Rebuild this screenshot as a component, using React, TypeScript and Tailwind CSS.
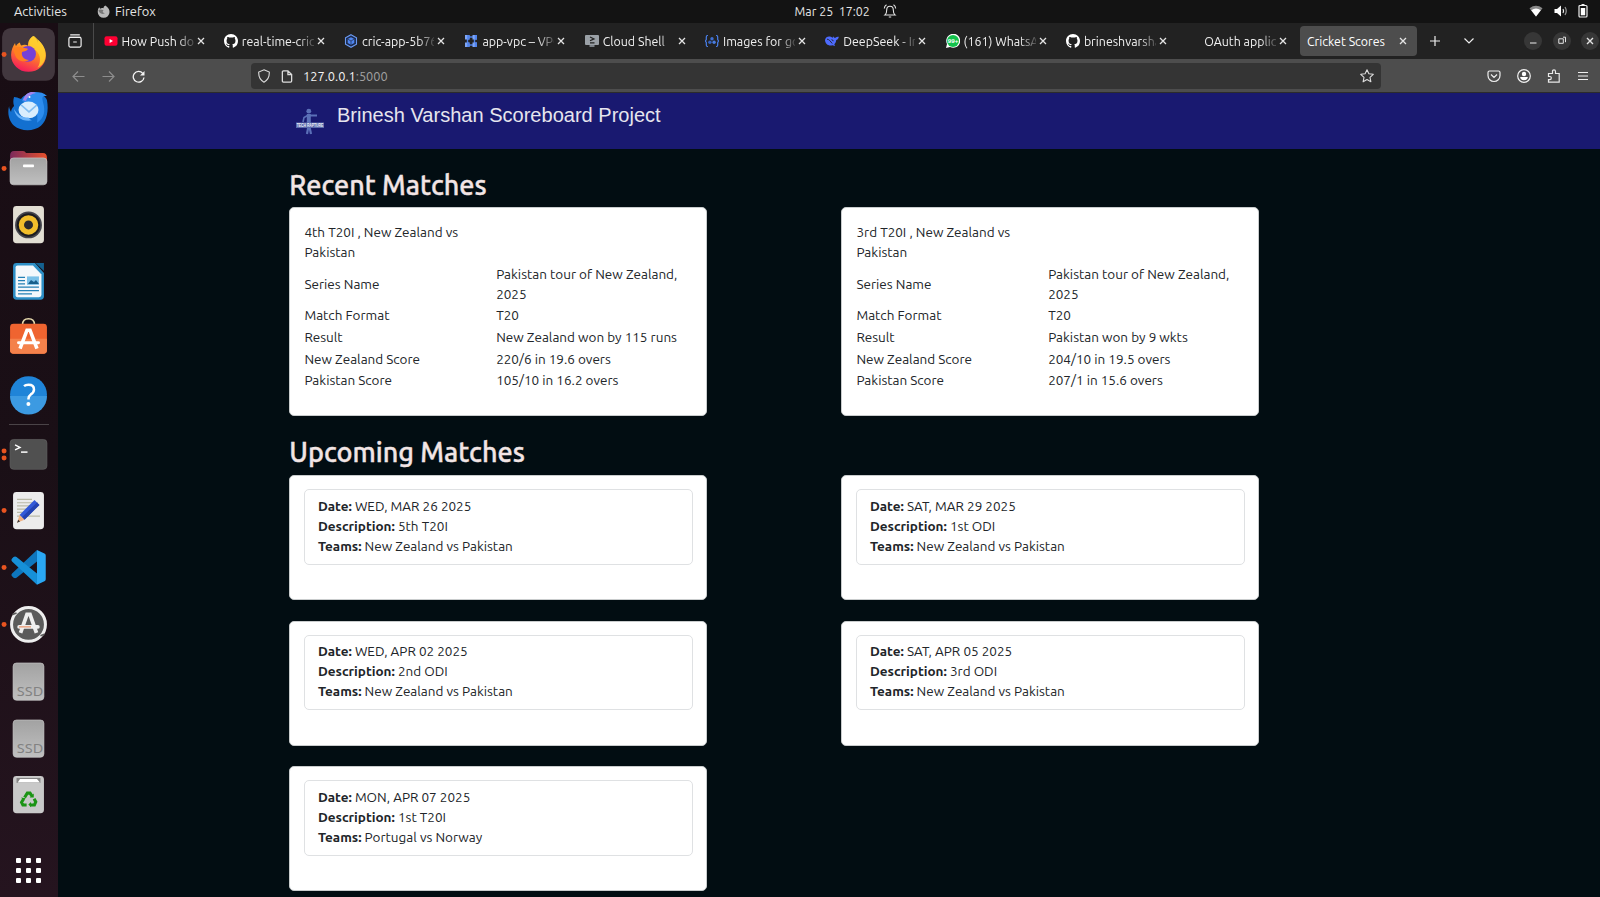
import React from "react";

const recent = [
  {
    title: "4th T20I , New Zealand vs Pakistan",
    rows: [
      ["Series Name", "Pakistan tour of New Zealand, 2025"],
      ["Match Format", "T20"],
      ["Result", "New Zealand won by 115 runs"],
      ["New Zealand Score", "220/6 in 19.6 overs"],
      ["Pakistan Score", "105/10 in 16.2 overs"],
    ],
  },
  {
    title: "3rd T20I , New Zealand vs Pakistan",
    rows: [
      ["Series Name", "Pakistan tour of New Zealand, 2025"],
      ["Match Format", "T20"],
      ["Result", "Pakistan won by 9 wkts"],
      ["New Zealand Score", "204/10 in 19.5 overs"],
      ["Pakistan Score", "207/1 in 15.6 overs"],
    ],
  },
];

const upcoming = [
  ["WED, MAR 26 2025", "5th T20I", "New Zealand vs Pakistan"],
  ["SAT, MAR 29 2025", "1st ODI", "New Zealand vs Pakistan"],
  ["WED, APR 02 2025", "2nd ODI", "New Zealand vs Pakistan"],
  ["SAT, APR 05 2025", "3rd ODI", "New Zealand vs Pakistan"],
  ["MON, APR 07 2025", "1st T20I", "Portugal vs Norway"],
];

const github = (
  <svg viewBox="0 0 16 16" className="size-3.5">
    <path fill="#fff" d="M8 0C3.58 0 0 3.58 0 8c0 3.54 2.29 6.53 5.47 7.59.4.07.55-.17.55-.38v-1.49c-2.01.37-2.53-.49-2.69-.94-.09-.23-.48-.94-.82-1.13-.28-.15-.68-.52-.01-.53.63-.01 1.08.58 1.23.82.72 1.21 1.87.87 2.33.66.07-.52.28-.87.51-1.07-1.78-.2-3.64-.89-3.64-3.95 0-.87.31-1.59.82-2.15-.08-.2-.36-1.02.08-2.12 0 0 .67-.21 2.2.82a7.6 7.6 0 0 1 4 0c1.53-1.04 2.2-.82 2.2-.82.44 1.1.16 1.92.08 2.12.51.56.82 1.27.82 2.15 0 3.07-1.87 3.75-3.65 3.95.29.25.54.73.54 1.48v2.2c0 .21.15.46.55.38A8 8 0 0 0 16 8c0-4.42-3.58-8-8-8z" />
  </svg>
);

const tabs: [string, React.ReactNode][] = [
  ["How Push do", <svg viewBox="0 0 14 14" className="size-3.5"><rect x="0.5" y="2.2" width="13" height="9.6" rx="2" fill="#ff0033" /><path d="M5.6 5v4L9 7z" fill="#fff" /></svg>],
  ["real-time-cric", github],
  ["cric-app-5b76", <svg viewBox="0 0 14 14" className="size-3.5"><path d="M7 .7l5.5 3.1v6.4L7 13.3l-5.5-3.1V3.8z" fill="#1c2b4d" stroke="#6b9bf5" strokeWidth="1.1" /><path d="M7 3.2l3.3 1.9v3.8L7 10.8 3.7 8.9V5.1z" fill="#4f86f0" /><path d="M3.7 5.1L7 7l3.3-1.9M7 7v3.8" stroke="#1c2b4d" strokeWidth=".7" fill="none" /></svg>],
  ["app-vpc – VPC", <svg viewBox="0 0 14 14" className="size-3.5"><path d="M3.5 3h7v8h-7z" fill="none" stroke="#4a7ee8" strokeWidth="1.4" /><path d="M1 1h4.5v4.5H1zM8.5 1H13v4.5H8.5zM1 8.5h4.5V13H1zM8.5 8.5H13V13H8.5z" fill="#7fa6f5" /><path d="M3.2 1h2.3v4.5H3.2zM10.7 1H13v4.5h-2.3zM3.2 8.5h2.3V13H3.2zM10.7 8.5H13V13h-2.3z" fill="#4f83ee" /></svg>],
  ["Cloud Shell", <svg viewBox="0 0 14 14" className="size-3.5"><rect x="0" y="1" width="14" height="10" rx="1" fill="#9aa0a6" /><path d="M4.5 11h5v2h-5z" fill="#7c8288" /><path d="M5 3l4 1.9L5 6.8M5 8.8h4.5" stroke="#222" strokeWidth="1.2" fill="none" /></svg>],
  ["Images for go", <svg viewBox="0 0 14 14" className="size-3.5"><path d="M3 1.5H2.500Q1.300 1.500 1.300 3v2.500L.4 7l.9 1.500V11q0 1.500 1.200 1.500H3M11 1.500h.5q1.200 0 1.200 1.500v2.500l.9 1.500-.9 1.500V11q0 1.500-1.200 1.500H11" stroke="#4a80ec" strokeWidth="1.2" fill="none" /><circle cx="7" cy="4.8" r="1.7" fill="#3f6fd0" /><circle cx="4.9" cy="8.3" r="1.7" fill="#3562c0" /><circle cx="9.1" cy="8.3" r="1.7" fill="#4a7de0" /></svg>],
  ["DeepSeek - In", <svg viewBox="0 0 14 14" className="size-3.5"><path d="M0 6C.5 3 3 2 5 2.500c1.200.2 1.700 1 2.800 1.300L8 2.200c.7.600 1 1.600 1.900 1.600 1.200 0 1.300-1.500 3.900-1-.2 1.900-1.300 3-2.600 3.200-.1 2-.9 3.200-2 4.200l1 1.200c-1 .5-2 .2-2.700-.2C3.600 12.400.2 10 0 6z" fill="#4d6bfe" /><path d="M2 5.200c2.200 0 3.500 2.300 5.200 4.300M6.500 5.600q1.500 0 1.700 1.600" stroke="#222" strokeWidth=".9" fill="none" /></svg>],
  ["(161) WhatsA", <svg viewBox="0 0 14 14" className="size-3.5"><path d="M0 14L1 10A7 7 0 1 1 4 13z" fill="#fff" /><circle cx="7" cy="7" r="6" fill="#12c24b" /><text x="7" y="9.2" fontSize="6.2" fontWeight="700" fill="#fff" textAnchor="middle" fontFamily="Liberation Sans">99+</text></svg>],
  ["brineshvarsha", github],
  ["OAuth applic", null],
];

function Close() {
  return (
    <svg viewBox="0 0 8 8" className="size-2 shrink-0">
      <path d="M1 1l6 6M7 1L1 7" stroke="#e4e4e4" strokeWidth="1.3" />
    </svg>
  );
}

const dockTop: [number, React.ReactNode][] = [
  [1, <>
    <rect x="2" y="2" width="53" height="53" rx="9" fill="#42373e" />
    <path d="M33.300 10c2.500 2 4 4.500 4.700 7 .2-1 .2-2 0-3 5 4 8 9.500 8 15.500C46 39 38 46 28.500 46S11 38.500 11 29c0-5 2-9 4-12 .2 1.500.5 2.300 1 3 1-2 2.500-3 4-3.500 0 1.500.5 2.500 1.500 3 2-1 5-.8 6.500.2-.3-4 2-8 5.300-9.700z" fill="url(#ff)" />
    <path d="M34 10c7 6 12 12 11.500 20-.5 6-4 10-8 12 4-6 3-13-1-17-4-3.500-9-5-7-10 .8-2.500 2-4 4.500-5z" fill="#ffcf2e" opacity=".85" />
    <circle cx="28" cy="28" r="8" fill="#7540d8" />
    <path d="M13 23c4-3 8-2 10-1 2 0 4 0 5 1-1 2-4 2.500-6 3-1 4 2 8 7 8-7 4-13-1-14-5z" fill="#ff801f" />
  </>],
  [0, <>
    <path d="M14 14c-1 3-1 6 0 9-2 2-3 4-3 6-1-2-2-4-2-6-2 8 0 15 5 20 7 6 20 6 27 0 6-6 8-15 6-26-1-3-4-5-10-6-6-1-12 0-16 5-3-1-5-2-7-2z" fill="#1370d0" />
    <path d="M22 18c3-8 8-9 13-9s9 1 12 4c-5 0-5 1-4 6 3 10 1 16-6 21 2-10-2-18-15-22z" fill="#2d8cee" />
    <path d="M23 17c3-8 9-9 13-7-5 1-9 4-10 8z" fill="#a384ec" />
    <circle cx="29.5" cy="14" r="1" fill="#fff" />
    <ellipse cx="28.5" cy="27" rx="10" ry="8.5" fill="#d9edfd" />
    <path d="M21 22l8 7 8-7" stroke="#83bdf0" strokeWidth="1.5" fill="none" />
    <path d="M14 26c1 8 8 13 18 11.500-2-1-3-2-3.500-3-6 .5-11-2-14.500-8.500z" fill="#69b3fa" />
  </>],
  [1, <>
    <path d="M10 16q0-5 4-5h9q2 0 3 2h17q4 0 4 5v6H10z" fill="url(#fold)" />
    <rect x="10" y="18" width="37" height="27" rx="3.5" fill="url(#gray)" stroke="#d0d0d0" strokeWidth=".6" />
    <rect x="23" y="24.5" width="11" height="2.8" rx=".8" fill="#fff" />
  </>],
  [0, <>
    <rect x="13" y="10" width="31" height="37.5" rx="3.5" fill="#e2ded3" />
    <circle cx="28.5" cy="29" r="13.5" fill="#44444c" /><circle cx="28.5" cy="29" r="11.8" fill="#1c1c20" /><circle cx="28.5" cy="29" r="9.8" fill="#f2be2b" /><circle cx="28.5" cy="29" r="4.5" fill="#2a2a2e" />
  </>],
  [0, <>
    <path d="M16.500 10H35l9 10v23.500q0 3.500-3.500 3.500h-24q-3.500 0-3.500-3.500v-30Q13 10 16.500 10z" fill="#2d8fc6" />
    <path d="M17.500 12.500H33l8.500 9V42q0 2.500-2.500 2.500H17.500q-2 0-2-2V14.500q0-2 2-2z" fill="#f4f8fb" />
    <path d="M35.500 10H44v8z" fill="#146190" />
    <path d="M18 24.500h7M18 27.700h7M18 31h7M18 34.300h21M18 37.700h21M18 41h14" stroke="#2380b5" strokeWidth="1.2" />
    <path d="M27 23.500h12V32H27z" fill="#7bc1e8" /><path d="M28 31l3-4 3 2 2-2 3 4z" fill="#175f8a" />
  </>],
  [0, <g transform="translate(0 .8)">
    <path d="M22.500 16v-2q0-6 6-6t6 6v2" stroke="#e5d8ac" strokeWidth="1.6" fill="none" />
    <rect x="10" y="13" width="37" height="30" rx="3.5" fill="#ef6430" /><path d="M10 28h37v11.500q0 3.500-3.500 3.500h-30q-3.500 0-3.500-3.500z" fill="#f4814b" />
    <path d="M20 38L27 19.500h3L37 38" stroke="#fff" strokeWidth="3.6" fill="none" /><path d="M18.500 32h20" stroke="#fff" strokeWidth="3" strokeLinecap="round" />
  </g>],
  [0, <g transform="translate(0 -.8)">
    <circle cx="28.5" cy="28.5" r="18.5" fill="#1f84d8" /><path d="M10 30h37a18.500 18.500 0 0 1-37 0z" fill="#3c9ae2" />
    <path d="M24 20q1.500-1.300 4.500-1.300 5.500 0 5.500 4.600 0 3-3.200 5-2.300 1.600-2.300 4.200v1" stroke="#fff" strokeWidth="2.5" fill="none" /><circle cx="28.4" cy="38" r="2" fill="#fff" />
  </g>],
];

const ssd = (
  <>
    <rect x="13" y="10" width="31" height="37.5" rx="3.5" fill="url(#gray)" stroke="#ccc" strokeWidth=".6" />
    <text x="16.8" y="43" fontSize="13.5" textLength="26.500" lengthAdjust="spacingAndGlyphs" fill="#828282" fontFamily="Noto Sans">SSD</text>
  </>
);

const dockBottom: [number, React.ReactNode][] = [
  [2, <>
    <rect x="10" y="13.5" width="37" height="30" rx="3.5" fill="#505050" stroke="#686868" strokeWidth=".6" />
    <path d="M15 19l5 2.500-5 2.500" stroke="#fff" strokeWidth="1.4" fill="none" /><path d="M21 26.200h6.500" stroke="#fff" strokeWidth="1.5" />
  </>],
  [1, <>
    <rect x="13" y="10" width="31" height="37.5" rx="3.5" fill="#ececec" />
    <path d="M17 17.500h15M17 20.800h21M17 24h17M17 27.300h14M17 30.500h11M17 34.300h23" stroke="#b9b9a6" strokeWidth="1.2" />
    <path d="M19.500 33L34.500 18l5 5-15 14.800z" fill="#3158d8" /><path d="M22 35.400L37 20.500l2.500 2.500-15 14.800z" fill="#2342b0" /><path d="M19.500 33l5 4.800-7.500 3z" fill="#eeb184" /><path d="M18.200 38l1.800 1.700-3 1.200z" fill="#333" />
  </>],
  [1, <>
    <path d="M37 11L12 34.500q-1.500 1.500 0 3l1.500 1.500q1.500 1 3 0L37 22.500z" fill="#0e76bd" />
    <path d="M37 46L12 22.500q-1.500-1.500 0-3l1.500-1.500q1.500-1 3 0L37 34.500z" fill="#1690d8" />
    <path d="M37 11l7.500 3.500q1.300.6 1.300 2v24q0 1.400-1.300 2L37 46z" fill="#2aa7f3" />
  </>],
  [1, <>
    <circle cx="28.5" cy="28.5" r="17" fill="#5b5b5b" stroke="#eee" strokeWidth="3" />
    <path d="M12.500 18.500l4 -1.500M40.500 40l4-1.500" stroke="#5b5b5b" strokeWidth="1.6" />
    <path d="M20.500 37L27 18.500h3L36.500 37" stroke="#eee" strokeWidth="3.8" fill="none" /><path d="M19 31h19" stroke="#eee" strokeWidth="3.6" strokeLinecap="round" /><path d="M19 31h12" stroke="#e8804e" strokeWidth="1" />
  </>],
  [0, ssd],
  [0, ssd],
  [0, <>
    <rect x="13" y="10" width="31" height="37.5" rx="3.5" fill="#c9c9c9" />
    <path d="M16.500 12h24v5h-24z" fill="#858585" /><path d="M18 16l2-3h17l3 3.500H17.500z" fill="#fff" />
    <g transform="translate(20.500 25.500) scale(.68)" fill="none" stroke="#1b9415" strokeWidth="4.5">
      <path d="M6 9L10 2.500h4L17 7M20 11l2.500 4.500-2 4.500H14M9 20H3.500L1.500 16 4 12" />
      <path d="M19.500 3v6h-6zM15.500 15.500v8l-4-4zM1 9l6.500 1-3 5z" fill="#1b9415" stroke="none" />
    </g>
  </>],
];

function DockItem({ dots, children }: { dots: number; children: React.ReactNode }) {
  return (
    <svg viewBox="0 0 58 57" className="h-[56.8px] w-[58px] shrink-0">
      {children}
      {dots === 1 && <circle cx="4" cy="28.5" r="2.5" fill="#e95420" />}
      {dots === 2 && <g fill="#e95420"><circle cx="4" cy="25" r="2.5" /><circle cx="4" cy="32" r="2.5" /></g>}
    </svg>
  );
}

function Dock() {
  return (
    <aside className="flex w-[58px] shrink-0 flex-col bg-gradient-to-b from-[#190d14] via-[#1a0f16] to-[#25141f] pt-[3px]">
      <svg className="h-0 w-0">
        <defs>
          <linearGradient id="ff" x1=".7" y1="0" x2=".3" y2="1"><stop offset="0" stopColor="#ffde3a" /><stop offset=".45" stopColor="#ff8a22" /><stop offset="1" stopColor="#f5155f" /></linearGradient>
          <linearGradient id="fold"><stop offset="0" stopColor="#7c2a5c" /><stop offset="1" stopColor="#e8512c" /></linearGradient>
          <linearGradient id="gray" x1="0" y1="0" x2="0" y2="1"><stop offset="0" stopColor="#a2a2a2" /><stop offset="1" stopColor="#c0c0c0" /></linearGradient>
        </defs>
      </svg>
      {dockTop.map(([d, n], i) => <DockItem key={i} dots={d}>{n}</DockItem>)}
      <div className="mx-auto mb-px h-px w-10 shrink-0 bg-[#4a4347]" />
      {dockBottom.map(([d, n], i) => <DockItem key={i} dots={d}>{n}</DockItem>)}
      <div className="ml-4 mt-[35px] grid w-[25px] grid-cols-3 gap-[5px]">
        {Array.from({ length: 9 }, (_, i) => <span key={i} className="size-[5px] rounded-[1px] bg-white" />)}
      </div>
    </aside>
  );
}

function TopBar() {
  return (
    <header className="flex h-[23px] shrink-0 items-center bg-[#131313] pb-px text-[12.9px] leading-none text-[#e6e6e6]">
      <div className="flex w-[794.5px] items-center pl-3.5">
        <span className="w-[83px]">Activities</span>
        <svg viewBox="0 0 14 14" className="mr-[5px] size-[13px]">
          <path d="M9 .5c3 2 4.500 4 4.500 7A6.300 6.300 0 0 1 .8 7.500C.8 5 1.500 3.500 2.500 2.500l.8 1.500C4.500 3 6 3 7 3.500 7 2 8 1 9 .5z" fill="#b9b9b9" />
          <path d="M1.500 5.500c2-1.500 4-.5 5.500.2C5.500 7 6 8.500 8.500 9 5 11 2 8.500 1.500 5.500z" fill="#777" />
        </svg>
        <span>Firefox</span>
      </div>
      <div className="flex items-center">
        <span className="w-[88px] whitespace-pre text-[12.4px]">Mar 25  17:02</span>
        <svg viewBox="0 0 14 14" className="size-[14px] shrink-0" fill="none" stroke="#e6e6e6" strokeWidth="1.1">
          <path d="M2 11h10c-1.500-1.200-1.700-2.500-1.700-5C10.300 3.500 9 2.200 7 2.200S3.700 3.500 3.700 6c0 2.500-.2 3.800-1.700 5zM5.800 13h2.400M3.500.8Q1.500 2 1.300 4.500M10.500.8Q12.500 2 12.700 4.500" />
        </svg>
      </div>
      <div className="ml-auto flex items-center justify-end gap-[10.5px] pr-3">
        <svg viewBox="0 0 14 12" className="h-3 w-3.5"><path d="M.5 3.200Q7-1.500 13.500 3.200L7 11.500z" fill="#888" /><path d="M2.200 5.200Q7 1.800 11.800 5.200L7 11.500z" fill="#fff" /></svg>
        <svg viewBox="0 0 14 12" className="h-3 w-3.5"><path d="M.5 4H3l4-3.500v11L3 8H.5z" fill="#fff" /><path d="M9 4q1.200 2 0 4" stroke="#eee" fill="none" strokeWidth="1.2" /><path d="M11 2q2.500 4 0 8" stroke="#999" fill="none" strokeWidth="1.2" /></svg>
        <svg viewBox="0 0 10 14" className="h-3.5 w-2.5"><path d="M3.500 0h3v1.500h-3z" fill="#eee" /><rect x="1" y="1.5" width="8" height="11.5" rx="1" fill="none" stroke="#eee" strokeWidth="1.2" /><path d="M2.800 4h4.400v7.300H2.800z" fill="#fff" /></svg>
      </div>
    </header>
  );
}

function WinButton({ children }: { children: React.ReactNode }) {
  return (
    <svg viewBox="0 0 18 18" className="size-[18px] shrink-0" fill="none" stroke="#e4e4e4">
      <circle cx="9" cy="9" r="9" fill="#373737" stroke="none" />
      {children}
    </svg>
  );
}

function TabBar() {
  return (
    <div className="flex h-9 shrink-0 items-center bg-[#222]">
      <div className="mr-[3px] flex h-full w-9 shrink-0 items-center justify-center border-r border-[#4a4a4a] pr-0.5">
        <svg viewBox="0 0 14 14" className="size-3.5" fill="none" stroke="#f0f0f0" strokeWidth="1.2">
          <path d="M2.200.8h9.600M1.200 3.300h11.600M5.200 8h3.600" /><rect x=".9" y="3.3" width="12.2" height="9.8" rx="1.5" />
        </svg>
      </div>
      {tabs.map(([label, icon], i) => (
        <div key={i} className="flex w-[120.3px] shrink-0 items-center pl-[6.5px] text-[12.4px] text-[#f0f0f0]">
          <span className="mr-1 w-3.5 shrink-0">{icon}</span>
          <span className="mr-[3px] w-[72px] overflow-hidden whitespace-nowrap pt-px [mask-image:linear-gradient(to_right,black_78%,transparent_105%)]">{label}</span>
          <Close />
        </div>
      ))}
      <div className="flex h-[30px] w-[117px] shrink-0 items-center justify-between rounded bg-[#4d4d4d] pl-[7px] pr-[9.5px] text-[12.4px] text-white">
        <span className="pt-px">Cricket Scores</span>
        <Close />
      </div>
      <svg viewBox="0 0 10 10" className="ml-[13px] size-2.5 shrink-0"><path d="M5 0v10M0 5h10" stroke="#eee" strokeWidth="1.2" /></svg>
      <svg viewBox="0 0 10 6" className="ml-6 h-1.5 w-2.5 shrink-0"><path d="M.5.5L5 5 9.500.5" stroke="#eee" strokeWidth="1.2" fill="none" /></svg>
      <div className="ml-auto flex gap-[10.5px] pr-px">
        <WinButton><path d="M6 11h6.500" strokeWidth="1.6" stroke="#aaa" /></WinButton>
        <WinButton><path d="M5.800 6.800h4.500v4.500H5.800zM10 5.200h2.500v5" /></WinButton>
        <WinButton><path d="M6 6l6 6M12 6l-6 6" strokeWidth="1.4" /></WinButton>
      </div>
    </div>
  );
}

function NavBar() {
  return (
    <div className="flex h-[34px] shrink-0 items-center border-b border-[#2c2c2c] bg-[#4d4d4d]">
      <div className="flex w-[193px] shrink-0 items-center gap-[17px] pl-[13.5px] pt-px">
        <svg viewBox="0 0 13 13" className="size-[13px]" fill="none" stroke="#8d8d8d" strokeWidth="1.2"><path d="M12.500 6.500H1M6 1.500l-5 5 5 5" /></svg>
        <svg viewBox="0 0 13 13" className="size-[13px]" fill="none" stroke="#8d8d8d" strokeWidth="1.2"><path d="M.5 6.500H12M7 1.500l5 5-5 5" /></svg>
        <svg viewBox="0 0 13 13" className="size-[13px]" fill="none" stroke="#f5f5f5" strokeWidth="1.3"><path d="M10.800 3.300A5.400 5.400 0 1 0 12 7.500" /><path d="M12.500 1v4.500H8z" fill="#f5f5f5" stroke="none" /></svg>
      </div>
      <div className="mt-px flex h-[26px] w-[1130px] shrink-0 items-center rounded bg-[#343434] px-[7px] text-[12.8px] text-[#f5f5f5]">
        <svg viewBox="0 0 12 14" className="mr-[11px] h-3.5 w-3" fill="none" stroke="#dcdcdc" strokeWidth="1.1"><path d="M6 .8l5.300 2.300c.2 4.500-1.300 8-5.300 10.100C2 11.100.5 7.600.7 3.100z" /></svg>
        <svg viewBox="0 0 12 14" className="mr-[10px] h-[13px] w-3" fill="none" stroke="#dcdcdc" strokeWidth="1.4"><path d="M1 2.200Q1 1 2.200 1H7l4 4v6.800Q11 13 9.800 13H2.200Q1 13 1 11.800zM7 1v4h4" /></svg>
        <span className="pt-px">127.0.0.1<span className="text-[#a2a2a2]">:5000</span></span>
        <svg viewBox="0 0 14 14" className="ml-auto size-3.5" fill="none" stroke="#dcdcdc" strokeWidth="1.1" strokeLinejoin="round"><path d="M7 .8l1.900 4 4.400.5L10 8.400l.9 4.400L7 10.600l-3.900 2.200.9-4.400L.7 5.300l4.400-.5z" /></svg>
      </div>
      <div className="ml-auto flex items-center gap-4 pr-[11px]">
        <svg viewBox="0 0 14 14" className="size-3.5" fill="none" stroke="#eee" strokeWidth="1.2"><path d="M2.500 2h9q1.500 0 1.500 1.500V6.500a6 6 0 0 1-12 0v-3Q1 2 2.500 2zM4 5.500l3 3 3-3" /></svg>
        <svg viewBox="0 0 14 14" className="size-3.5"><circle cx="7" cy="7" r="6.3" fill="none" stroke="#f3f3f3" strokeWidth="1.2" /><circle cx="7" cy="5" r="2.2" fill="#fff" /><path d="M3.200 8h7.600q0 3-3.800 3.200Q3.200 11 3.200 8z" fill="#fff" /></svg>
        <svg viewBox="0 0 14 14" className="size-3.5" fill="none" stroke="#e8e8e8" strokeWidth="1.2"><path d="M1.500 7.500V4.500h4V2.500q0-1.700 1.500-1.700t1.500 1.700v2h3.700v8.700H1.500v-2.500h1.300q1.500 0 1.500-1.600T2.800 7.500z" /></svg>
        <svg viewBox="0 0 12 14" className="h-3.5 w-3" stroke="#eee" strokeWidth="1.2"><path d="M1 3.500h10M1 7h10M1 10.500h10" /></svg>
      </div>
    </div>
  );
}

const cardBox = "rounded-[5px] border border-[#c9cccd] bg-white px-[13.3px] pt-[13.3px] text-[13.5px] leading-5 text-[#212529]";
const heading = "text-[27px] font-medium leading-8 text-[#f2e5e5] [-webkit-text-stroke:0.4px_#f2e5e5]";

function Page() {
  return (
    <main className="flex-1 overflow-hidden bg-[#020d12]">
      <div className="flex h-14 bg-[#191970] pl-[238px] pt-[9px]">
        <svg viewBox="0 0 28 28" className="mt-[6px] size-7 shrink-0">
          <g stroke="#5b70b8" fill="none">
            <path d="M12.500 7L8 9.500 7 14" strokeWidth="1.6" />
            <path d="M13 7.500h8" strokeWidth="2" />
            <path d="M12.800 6v9" strokeWidth="4" />
            <path d="M12.300 19l-1.300 7M13.500 19l1.500 7" strokeWidth="2.2" />
          </g>
          <circle cx="12.8" cy="3.2" r="2.4" fill="#5b70b8" />
          <path d="M0 14.500h28v5.500H0z" fill="#5a69ab" />
          <text x=".8" y="19.3" fontSize="5.8" fontWeight="700" textLength="26.400" lengthAdjust="spacingAndGlyphs" fill="#f1f3fa" fontFamily="Liberation Sans">TECH RAPTURE</text>
        </svg>
        <h1 className="ml-[13px] font-['Liberation_Sans',sans-serif] text-[20.05px] leading-[26px] text-[#e6e5ee]">Brinesh Varshan Scoreboard Project</h1>
      </div>
      <div className="w-[1201px] pl-[231.3px]">
        <h2 className={heading + " h-[58px] pt-[19.5px]"}>Recent Matches</h2>
        <div className="grid grid-cols-[418px_418px] gap-x-[134px]">
          {recent.map((m) => (
            <section key={m.title} className={cardBox + " h-[208.5px]"}>
              <table>
                <tbody>
                  <tr><td className="w-[192px] py-[0.83px] pl-[0.83px] pr-6">{m.title}</td><td className="w-[198px]" /></tr>
                  {m.rows.map(([k, v]) => (
                    <tr key={k}><td className="py-[0.83px] pl-[0.83px]">{k}</td><td className="py-[0.83px] pl-[0.83px] pr-2">{v}</td></tr>
                  ))}
                </tbody>
              </table>
            </section>
          ))}
        </div>
        <h2 className={heading + " h-[59.5px] pt-[20.7px]"}>Upcoming Matches</h2>
        <div className="grid grid-cols-[418px_418px] gap-x-[134px] gap-y-[20.5px]">
          {upcoming.map(([d, n, t]) => (
            <section key={d} className={cardBox + " h-[125px]"}>
              <ul className="h-[75.5px] rounded-[5px] border border-[#dfe1e3] px-[13.3px] pt-[5.5px]">
                <li><b>Date:</b> {d}</li>
                <li><b>Description:</b> {n}</li>
                <li><b>Teams:</b> {t}</li>
              </ul>
            </section>
          ))}
        </div>
      </div>
    </main>
  );
}

export default function App() {
  return (
    <div className="flex h-[897px] w-[1600px] flex-col overflow-hidden bg-[#020d12] font-['Ubuntu','Noto_Sans',sans-serif]">
      <TopBar />
      <div className="flex min-h-0 flex-1">
        <Dock />
        <div className="flex min-w-0 flex-1 flex-col">
          <TabBar />
          <NavBar />
          <Page />
        </div>
      </div>
    </div>
  );
}
